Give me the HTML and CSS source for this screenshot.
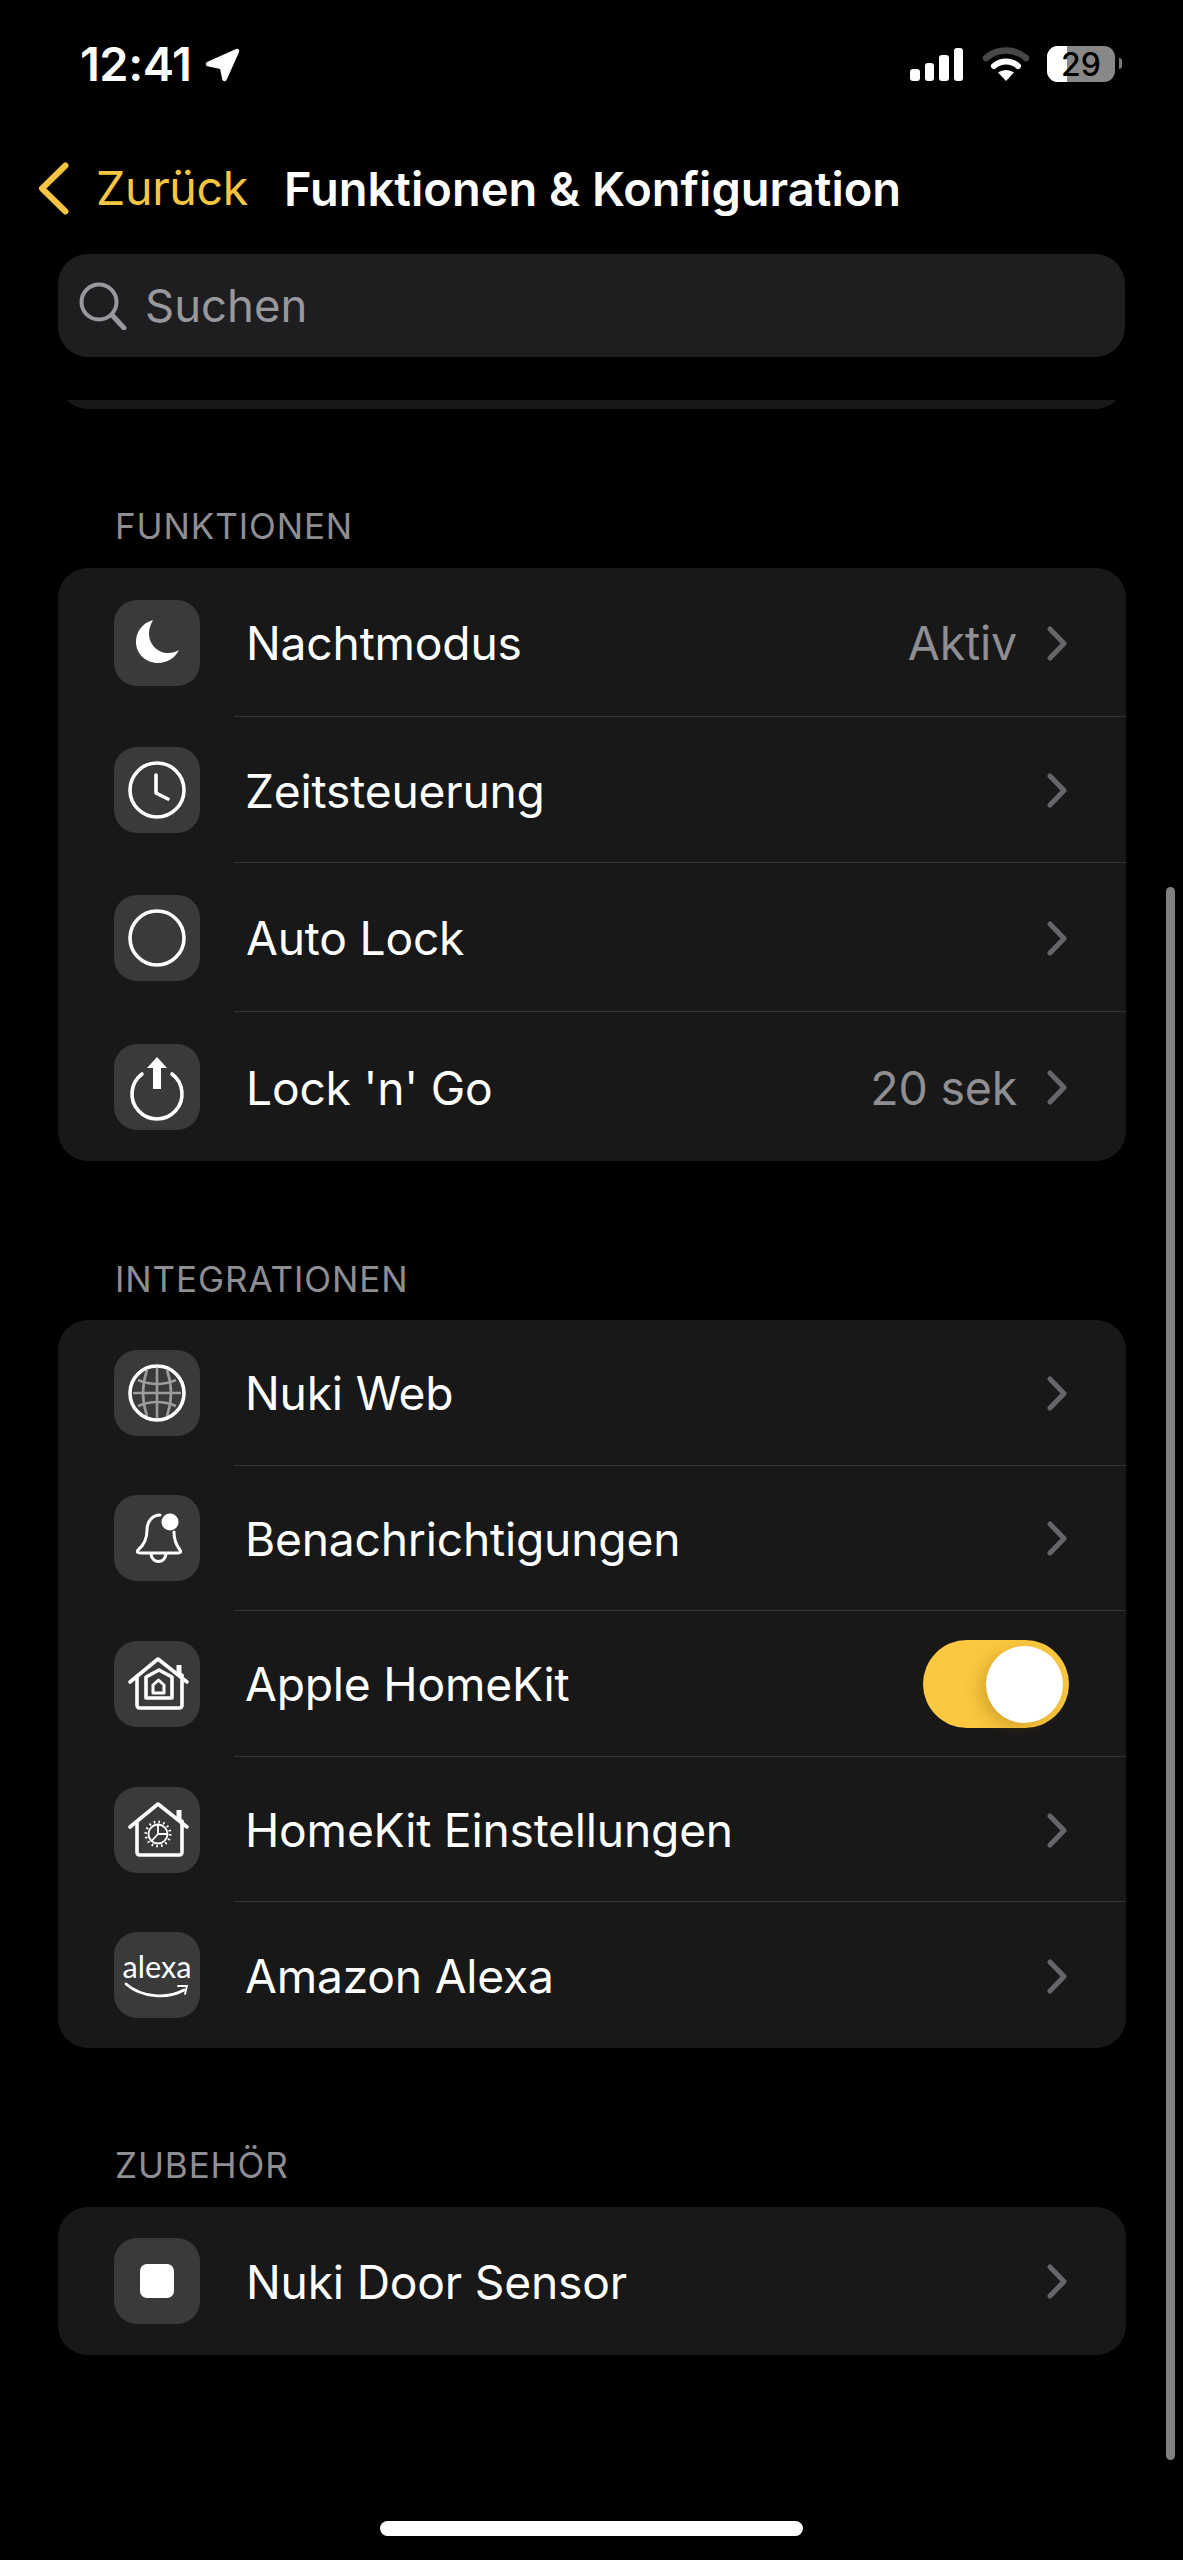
FILE: index.html
```html
<!DOCTYPE html>
<html lang="de">
<head>
<meta charset="utf-8">
<title>Funktionen &amp; Konfiguration</title>
<link rel="stylesheet" href="styles.css">
</head>
<body>
<div class="phone">
  <header class="status">
    <div class="status-left">
      <span class="time">12:41</span>
      <svg class="loc" viewBox="0 0 35 34"><path d="M32 3 L3 16 L17 19 L19.500 31 Z" fill="#fff" stroke="#fff" stroke-width="4.500" stroke-linejoin="round"/></svg>
    </div>
    <div class="status-right">
      <div class="signal"><i class="b1"></i><i class="b2"></i><i class="b3"></i><i class="b4"></i></div>
      <svg class="wifi" viewBox="0 0 46 34">
        <path d="M3 11 C14 1 32 1 43 11" fill="none" stroke="#474747" stroke-width="6.500" stroke-linecap="round"/>
        <path d="M11 19 C18 13 28 13 35 19" fill="none" stroke="#fff" stroke-width="6" stroke-linecap="round"/>
        <path d="M23 34 L15 25.500 C20 22 26 22 31 25.500 Z" fill="#fff"/>
      </svg>
      <div class="battery"><div class="battery-fill"></div><span class="battery-num">29</span></div>
      <div class="battery-nub"></div>
    </div>
  </header>

  <nav class="nav">
    <svg class="back" viewBox="0 0 31 53"><path d="M27.500 3.500 L4 26.500 L27.500 49.500" fill="none" stroke="#f7c544" stroke-width="6" stroke-linecap="round" stroke-linejoin="round"/></svg>
    <span class="back-label">Zurück</span>
    <span class="title">Funktionen &amp; Konfiguration</span>
  </nav>

  <div class="search">
    <svg class="search-icon" viewBox="0 0 48 48"><circle cx="20" cy="20" r="17.500" fill="none" stroke="#98989d" stroke-width="4"/><path d="M33 33 L45 46" stroke="#98989d" stroke-width="5" stroke-linecap="round"/></svg>
    <span class="search-text">Suchen</span>
  </div>

  <div class="peek"><div class="peek-card"></div></div>

  <h2 class="section first">FUNKTIONEN</h2>
  <section class="card">
    <div class="row r149">
      <span class="icon"><svg viewBox="0 0 86 86"><path d="M39 20 C28 23 22 32 22 42 C22 54 32 63 44 63 C53 63 61 58 65 50 C62 52 58 53 54 53 C44 53 35 45 35 33 C35 28 37 24 39 20 Z" fill="#fff"/></svg></span>
      <div class="body"><span class="label">Nachtmodus</span><span class="value">Aktiv</span><svg class="chev" viewBox="0 0 20 35"><path d="M3 3 L17 17.500 L3 32" fill="none" stroke="#66666a" stroke-width="5" stroke-linecap="round" stroke-linejoin="round"/></svg></div>
    </div>
    <div class="row r146">
      <span class="icon"><svg viewBox="0 0 86 86"><circle cx="43" cy="43" r="27" class="ln"/><path d="M42 28 V46 L54 52" class="ln"/></svg></span>
      <div class="body"><span class="label tight">Zeitsteuerung</span><svg class="chev" viewBox="0 0 20 35"><path d="M3 3 L17 17.500 L3 32" fill="none" stroke="#66666a" stroke-width="5" stroke-linecap="round" stroke-linejoin="round"/></svg></div>
    </div>
    <div class="row r149">
      <span class="icon"><svg viewBox="0 0 86 86"><circle cx="43" cy="43" r="27" class="ln"/></svg></span>
      <div class="body"><span class="label">Auto Lock</span><svg class="chev" viewBox="0 0 20 35"><path d="M3 3 L17 17.500 L3 32" fill="none" stroke="#66666a" stroke-width="5" stroke-linecap="round" stroke-linejoin="round"/></svg></div>
    </div>
    <div class="row r149">
      <span class="icon"><svg viewBox="0 0 86 86"><path d="M28 30 A25 25 0 1 0 58 30" class="ln"/><path d="M43 13 L53 24 H47 V45 H39 V24 H33 Z" fill="#fff"/></svg></span>
      <div class="body"><span class="label">Lock 'n' Go</span><span class="value">20 sek</span><svg class="chev" viewBox="0 0 20 35"><path d="M3 3 L17 17.500 L3 32" fill="none" stroke="#66666a" stroke-width="5" stroke-linecap="round" stroke-linejoin="round"/></svg></div>
    </div>
  </section>

  <h2 class="section second">INTEGRATIONEN</h2>
  <section class="card">
    <div class="row r145">
      <span class="icon"><svg viewBox="0 0 86 86">
        <g class="grid"><path d="M43 18 V68"/><path d="M19 43 H67"/><path d="M24 30 Q43 38 62 30"/><path d="M24 56 Q43 48 62 56"/><path d="M33 20 Q25 43 33 66"/><path d="M53 20 Q61 43 53 66"/></g>
        <circle cx="43" cy="43" r="27" class="ln"/></svg></span>
      <div class="body"><span class="label tight">Nuki Web</span><svg class="chev" viewBox="0 0 20 35"><path d="M3 3 L17 17.500 L3 32" fill="none" stroke="#66666a" stroke-width="5" stroke-linecap="round" stroke-linejoin="round"/></svg></div>
    </div>
    <div class="row r145">
      <span class="icon"><svg viewBox="0 0 86 86"><path d="M46 20 C38 20 33 27 33 35 C33 44 30 50 24 55 Q22 58 26 58 H64 Q68 58 66 55 C62 50 60 45 60 37" class="ln thin"/><path d="M37 59 C38 69 51 69 52 59" class="ln thin"/><circle cx="56" cy="27" r="8.500" fill="#fff"/></svg></span>
      <div class="body"><span class="label tight">Benachrichtigungen</span><svg class="chev" viewBox="0 0 20 35"><path d="M3 3 L17 17.500 L3 32" fill="none" stroke="#66666a" stroke-width="5" stroke-linecap="round" stroke-linejoin="round"/></svg></div>
    </div>
    <div class="row r145">
      <span class="icon"><svg viewBox="0 0 86 86"><path d="M16 41 L44 18 L73 41" class="ln"/><path d="M65 24 V34" class="ln wide"/><path d="M23 37 V64 Q23 67 26 67 H65 Q68 67 68 64 V34" class="ln"/><path d="M32 36 L45 29 L58 36 V57 H32 Z" class="ln"/><path d="M39 44 L44.500 39 L50 44 V52 H39 Z" class="ln thin"/></svg></span>
      <div class="body"><span class="label tight">Apple HomeKit</span><div class="toggle"><div class="knob"></div></div></div>
    </div>
    <div class="row r145">
      <span class="icon"><svg viewBox="0 0 86 86"><path d="M16 40 L44 17 L73 40" class="ln"/><path d="M65 23 V33" class="ln wide"/><path d="M23 36 V65 Q23 68 26 68 H65 Q68 68 68 65 V34" class="ln"/><circle cx="44" cy="47" r="9.500" class="ln hair"/><circle cx="44" cy="47" r="12.200" class="teeth"/><path d="M44 47 L44 37.500 M44 47 L53 47 M44 47 L37.500 54" class="ln hair"/></svg></span>
      <div class="body"><span class="label tight">HomeKit Einstellungen</span><svg class="chev" viewBox="0 0 20 35"><path d="M3 3 L17 17.500 L3 32" fill="none" stroke="#66666a" stroke-width="5" stroke-linecap="round" stroke-linejoin="round"/></svg></div>
    </div>
    <div class="row r145">
      <span class="icon"><svg viewBox="0 0 86 86"><text x="43" y="46" class="alexa" text-anchor="middle" textLength="69" lengthAdjust="spacingAndGlyphs">alexa</text><path d="M12 52 C28 66 54 67 70 58" fill="none" stroke="#fff" stroke-width="2.800" stroke-linecap="round"/><path d="M64 54 H73 L71 62" fill="none" stroke="#fff" stroke-width="1.800" stroke-linecap="round"/></svg></span>
      <div class="body"><span class="label tight">Amazon Alexa</span><svg class="chev" viewBox="0 0 20 35"><path d="M3 3 L17 17.500 L3 32" fill="none" stroke="#66666a" stroke-width="5" stroke-linecap="round" stroke-linejoin="round"/></svg></div>
    </div>
  </section>

  <h2 class="section third">ZUBEHÖR</h2>
  <section class="card">
    <div class="row r148">
      <span class="icon"><svg viewBox="0 0 86 86"><rect x="26" y="26" width="34" height="34" rx="7" fill="#fff"/></svg></span>
      <div class="body"><span class="label">Nuki Door Sensor</span><svg class="chev" viewBox="0 0 20 35"><path d="M3 3 L17 17.500 L3 32" fill="none" stroke="#66666a" stroke-width="5" stroke-linecap="round" stroke-linejoin="round"/></svg></div>
    </div>
  </section>

  <div class="scrollbar"></div>
  <div class="home"></div>
</div>
</body>
</html>
```

FILE: styles.css
```css
* { box-sizing: border-box; }
html, body { margin: 0; padding: 0; background: #000; }
body { font-family: Inter, "Noto Sans", sans-serif; color: #fff; }
.phone { position: relative; width: 1183px; height: 2560px; overflow: hidden; background: #000; }

.status { height: 145px; padding: 46px 61px 0 80px; display: flex; justify-content: space-between; align-items: flex-start; }
.status-left { display: flex; align-items: center; height: 36px; }
.time { font-size: 47px; font-weight: 600; line-height: 36px; letter-spacing: -0.5px; }
.loc { width: 35px; height: 34px; margin-left: 14px; margin-top: 2px; }
.status-right { display: flex; align-items: flex-start; height: 36px; }
.signal { display: flex; align-items: flex-end; gap: 5px; height: 33px; margin-top: 2px; }
.signal i { display: block; width: 9.500px; background: #fff; border-radius: 3px; }
.signal .b1 { height: 12px; }
.signal .b2 { height: 18px; }
.signal .b3 { height: 26px; }
.signal .b4 { height: 33px; }
.wifi { width: 46px; height: 34px; margin-left: 20px; margin-top: 1px; }
.battery { position: relative; width: 68px; height: 36px; margin-left: 18px; border-radius: 11px; background: #888; }
.battery-fill { width: 20px; height: 36px; background: #fff; border-radius: 11px 0 0 11px; }
.battery-num { position: absolute; top: 0; left: 0; width: 68px; text-align: center; font-size: 32px; line-height: 38px; font-weight: 500; color: #000; }
.battery-nub { width: 3px; height: 11px; margin: 12px 0 0 4px; background: #777; border-radius: 0 3px 3px 0; }

.nav { height: 86px; display: flex; align-items: center; padding-left: 38px; }
.back { width: 31px; height: 53px; flex: none; }
.back-label { margin-left: 27px; font-size: 46.500px; color: #f7c544; letter-spacing: -0.3px; }
.title { margin-left: 36px; font-size: 47px; font-weight: 600; white-space: nowrap; }

.search { margin: 23px 58px 0 58px; height: 103px; border-radius: 30px; background: #1e1e20; display: flex; align-items: center; padding-left: 21px; }
.search-icon { width: 48px; height: 48px; flex: none; }
.search-text { margin-left: 18px; font-size: 45.500px; color: #98989d; }

.peek { margin: 43px 58px 0; height: 9px; overflow: hidden; display: flex; align-items: flex-end; }
.peek-card { width: 100%; height: 60px; flex: none; background: #181818; border-radius: 30px; }

.section { padding-left: 115px; font-size: 35px; line-height: 40px; font-weight: 400; color: #8e8e93; letter-spacing: 0.9px; }
.section.first { margin: 97px 0 22px; }
.section.second { margin: 98px 0 21px; }
.section.third { margin: 97px 0 22px; }

.card { margin: 0 57px 0 58px; background: #181818; border-radius: 30px; overflow: hidden; }
.row { display: flex; align-items: stretch; padding-left: 56px; }
.r145 { height: 145.600px; }
.r146 { height: 146px; }
.r148 { height: 148px; }
.r149 { height: 149px; }
.icon { flex: none; align-self: center; width: 86px; height: 86px; border-radius: 23px; background: #3a3a3a; display: block; }
.icon svg { display: block; width: 86px; height: 86px; }
.ln { fill: none; stroke: #fff; stroke-width: 3.600; stroke-linecap: round; stroke-linejoin: round; }
.ln.thin { stroke-width: 3; }
.ln.hair { stroke-width: 1.800; }
.ln.wide { stroke-width: 5; stroke-linecap: butt; }
.grid { fill: none; stroke: #9c9c9c; stroke-width: 2.600; }
.teeth { fill: none; stroke: #fff; stroke-width: 2.600; stroke-dasharray: 1.600 3.200; }
.alexa { font-family: Lato, "Open Sans", sans-serif; font-size: 31px; fill: #fff; }

.body { flex: 1; min-width: 0; margin-left: 34px; padding: 2px 59px 0 12px; display: flex; align-items: center; border-bottom: 1px solid #343434; }
.row:last-child .body { border-bottom: 0; }
.label { flex: 1; font-size: 46.200px; letter-spacing: -0.2px; white-space: nowrap; }
.label.tight { margin-left: -1px; }
.value { margin-right: 30px; font-size: 46.500px; color: #8e8e93; letter-spacing: -0.2px; }
.chev { flex: none; width: 20px; height: 35px; }

.toggle { position: relative; width: 146px; height: 88px; margin-right: -2px; border-radius: 44px; background: #fbc83f; }
.knob { position: absolute; top: 6px; right: 6px; width: 77px; height: 77px; border-radius: 50%; background: #fff; box-shadow: -6px 5px 16px rgba(120, 80, 0, 0.28); }

.scrollbar { position: absolute; left: 1166px; top: 887px; width: 9px; height: 1573px; border-radius: 5px; background: #808080; }
.home { position: absolute; left: 380px; top: 2521px; width: 423px; height: 15px; border-radius: 8px; background: #fff; }
```
